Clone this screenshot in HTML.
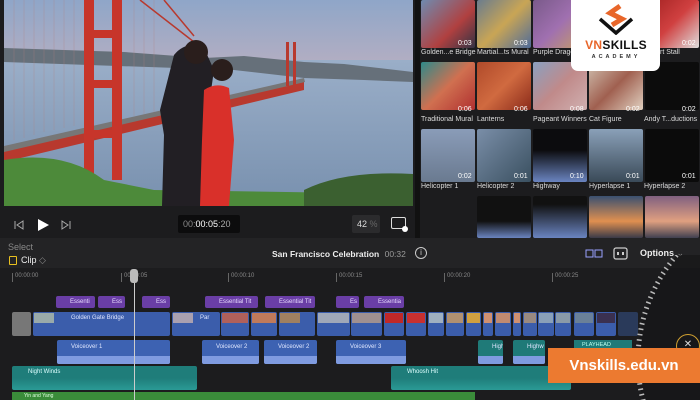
<!DOCTYPE html>
<html><head><meta charset="utf-8"><style>
*{margin:0;padding:0;box-sizing:border-box}
html,body{width:700px;height:400px;overflow:hidden}
body{background:#1c1c1e;font-family:"Liberation Sans",sans-serif;color:#ddd}
#w{position:relative;width:700px;height:400px;overflow:hidden}
.a{position:absolute}
.th{position:absolute;width:54px;height:48px;border-radius:2px}
.lb{position:absolute;font-size:7px;color:#ddd;white-space:nowrap}
.du{position:absolute;font-size:7px;color:#fff}
.t{position:absolute;top:296px;height:12px;background:#6a3ea6;border-radius:2px;font-size:6px;color:#e8dcff;padding:3px 0 0 14px;overflow:hidden;white-space:nowrap}
.c{position:absolute;top:312px;height:24px;background:#3b5dab;border-radius:2px;overflow:hidden}
.c i{position:absolute;left:1px;top:1px;right:1px;height:10px;display:block}
.v{position:absolute;top:340px;height:24px;background:#3d62b2;border-radius:2px;font-size:6px;color:#dfe6ff;padding:4px 0 0 14px;overflow:hidden;white-space:nowrap}
.v:after{content:"";position:absolute;left:0;right:0;bottom:0;height:8px;background:#7f9be0}
.ru{position:absolute;top:273px;font-size:6px;color:#888;border-left:1px solid #666;padding-left:2px;height:9px}
</style></head><body><div id="w">
<svg class="a" style="left:4px;top:0" width="409" height="206" viewBox="0 0 409 206">
<defs><linearGradient id="sk" x1="0" y1="0" x2="0" y2="1"><stop offset="0" stop-color="#8fa6c8"/><stop offset=".5" stop-color="#c9b3bf"/><stop offset="1" stop-color="#a9b6cc"/></linearGradient>
<linearGradient id="wa" x1="0" y1="0" x2="0" y2="1"><stop offset="0" stop-color="#9aaec8"/><stop offset="1" stop-color="#7890ae"/></linearGradient></defs>
<rect width="409" height="206" fill="url(#sk)"/>
<rect y="60" width="409" height="146" fill="url(#wa)"/>
<path d="M0 48 L120 52 L200 58 L240 56 L300 62 L340 64 L409 72 L409 82 L360 80 L300 78 L230 70 L0 62Z" fill="#66707a"/>
<path d="M0 150 L300 80 L300 90 L0 162Z" fill="#b8392e"/>
<path d="M0 146 L300 78 L301 82 L0 152Z" fill="#777"/>
<path d="M10 0 V140 M20 0 V138 M30 0 V135 M40 0 V132 M50 0 V130 M60 0 V128 M70 0 V126 M130 0 V116 M140 0 V114 M150 0 V112" stroke="#b08080" stroke-width=".5" opacity=".6"/>
<rect x="80" y="0" width="10" height="180" fill="#c7352a"/><rect x="108" y="0" width="10" height="180" fill="#c7352a"/>
<rect x="88" y="30" width="22" height="8" fill="#c7352a"/><rect x="88" y="80" width="22" height="8" fill="#c7352a"/><rect x="88" y="130" width="22" height="8" fill="#c7352a"/>
<rect x="282" y="42" width="3" height="44" fill="#b8392e"/><rect x="289" y="42" width="3" height="44" fill="#b8392e"/>
<path d="M136 0 L190 42" stroke="#b8392e" stroke-width="1.5"/><path d="M160 0 L190 36" stroke="#b8392e" stroke-width="1.5"/>
<path d="M0 160 Q60 150 100 180 L150 190 L409 194 L409 206 L0 206Z" fill="#4d8a3a"/>
<path d="M300 190 Q340 170 409 174 L409 206 L300 206Z" fill="#3b6030"/>
<path d="M170 55 Q182 40 200 48 L210 70 L200 140 L200 206 L158 206 L160 135 L156 110Z" fill="#221f24"/>
<circle cx="192" cy="52" r="12" fill="#2a1e1c"/>
<path d="M200 90 Q212 82 225 88 L230 140 L225 206 L196 206 L198 140Z" fill="#d9302a"/>
<circle cx="218" cy="70" r="11" fill="#2a1e1c"/>
</svg>
<div class="a" style="left:0;top:206px;width:415px;height:32px;background:#1c1c1e"></div>
<svg class="a" style="left:12px;top:218px" width="70" height="14"><path d="M3 3v8M11 3L5 7l6 4z" stroke="#aaa" fill="none" stroke-width="1"/><path d="M26 1l11 6-11 6z" fill="#fff"/><path d="M50 3l6 4-6 4zM58 3v8" stroke="#aaa" fill="none" stroke-width="1"/></svg>
<div class="a" style="left:178px;top:215px;width:62px;height:18px;background:#0c0c0d;border-radius:2px;font-size:9px;color:#fff;padding:4px 0 0 5px"><span style="color:#888">00:</span>00:05<span style="color:#aaa">:20</span></div>
<div class="a" style="left:352px;top:215px;width:28px;height:18px;background:#2b2b2d;border-radius:2px;font-size:9px;color:#ddd;padding:4px 0 0 5px">42 <span style="color:#666">%</span></div>
<div class="a" style="left:391px;top:217px;width:15px;height:12px;border:1.5px solid #ddd;border-radius:2px"></div><div class="a" style="left:402px;top:226px;width:6px;height:6px;border-radius:3px;background:#fff"></div>
<div class="a" style="left:415px;top:0;width:5px;height:238px;background:#111"></div>
<div class="th" style="left:421px;top:0;background:linear-gradient(135deg,#6f8bb0,#b04040 60%,#334)"></div>
<div class="th" style="left:477px;top:0;background:linear-gradient(135deg,#6a7c8e,#c9a555,#4f6b9a)"></div>
<div class="th" style="left:533px;top:0;background:linear-gradient(135deg,#7a5a8a,#a070b0,#c8a060)"></div>
<div class="th" style="left:645px;top:0;background:linear-gradient(135deg,#a02020,#d04040,#ddd)"></div>
<div class="lb" style="left:421px;top:49px">Golden...e Bridge</div><div class="lb" style="left:477px;top:49px">Martial...ts Mural</div><div class="lb" style="left:533px;top:49px">Purple Drago</div><div class="lb" style="left:660px;top:49px">rt Stall</div>
<div class="th" style="left:421px;top:62px;background:linear-gradient(135deg,#2e8a8a,#d07050,#b03030)"></div>
<div class="th" style="left:477px;top:62px;background:linear-gradient(135deg,#b04a2a,#d06a40,#8a2a1a)"></div>
<div class="th" style="left:533px;top:62px;background:linear-gradient(135deg,#8aa0c0,#c08a8a,#d0b0b0)"></div>
<div class="th" style="left:589px;top:62px;background:linear-gradient(135deg,#d0c0b0,#a06050,#e0d0c0)"></div>
<div class="th" style="left:645px;top:62px;background:#0c0c0c"></div>
<div class="lb" style="left:421px;top:116px">Traditional Mural</div><div class="lb" style="left:477px;top:116px">Lanterns</div><div class="lb" style="left:533px;top:116px">Pageant Winners</div><div class="lb" style="left:589px;top:116px">Cat Figure</div><div class="lb" style="left:644px;top:116px">Andy T...ductions</div>
<div class="th" style="left:421px;top:129px;height:53px;background:linear-gradient(#8a9cb8,#6a7a90)"></div>
<div class="th" style="left:477px;top:129px;height:53px;background:linear-gradient(135deg,#7a8ea8,#3a5060)"></div>
<div class="th" style="left:533px;top:129px;height:53px;background:linear-gradient(#0c0c0e 40%,#6a84c0)"></div>
<div class="th" style="left:589px;top:129px;height:53px;background:linear-gradient(#8aa0b8,#3a4a58)"></div>
<div class="th" style="left:645px;top:129px;height:53px;background:#0b0b0b"></div>
<div class="lb" style="left:421px;top:183px">Helicopter 1</div><div class="lb" style="left:477px;top:183px">Helicopter 2</div><div class="lb" style="left:533px;top:183px">Highway</div><div class="lb" style="left:589px;top:183px">Hyperlapse 1</div><div class="lb" style="left:644px;top:183px">Hyperlapse 2</div>
<div class="th" style="left:477px;top:196px;height:42px;background:linear-gradient(#111 60%,#6a84c0)"></div>
<div class="th" style="left:533px;top:196px;height:42px;background:linear-gradient(#111 20%,#6a84c0)"></div>
<div class="th" style="left:589px;top:196px;height:42px;background:linear-gradient(#3a5070,#e09050 60%,#3a3a48)"></div>
<div class="th" style="left:645px;top:196px;height:42px;background:linear-gradient(#806080,#e0a080 60%,#404050)"></div>
<div class="du" style="left:458px;top:40px">0:03</div><div class="du" style="left:514px;top:40px">0:03</div><div class="du" style="left:682px;top:40px">0:02</div>
<div class="du" style="left:458px;top:106px">0:06</div><div class="du" style="left:514px;top:106px">0:06</div><div class="du" style="left:570px;top:106px">0:08</div><div class="du" style="left:626px;top:106px">0:02</div><div class="du" style="left:682px;top:106px">0:02</div>
<div class="du" style="left:458px;top:173px">0:02</div><div class="du" style="left:514px;top:173px">0:01</div><div class="du" style="left:570px;top:173px">0:10</div><div class="du" style="left:626px;top:173px">0:01</div><div class="du" style="left:682px;top:173px">0:01</div>
<div class="a" style="left:571px;top:0;width:89px;height:71px;background:#fff;border-radius:0 0 7px 7px"></div>
<svg class="a" style="left:596px;top:3px" width="40" height="32"><path d="M24 3 L14 10 L26 16 L16 22" stroke="#e8662a" stroke-width="5" fill="none"/><path d="M4 16 L20 30 L36 16" stroke="#111" stroke-width="3.5" fill="none"/></svg>
<div class="a" style="left:574px;top:38px;width:84px;text-align:center;font-size:12px;font-weight:bold;color:#111;letter-spacing:.3px"><span style="color:#e8662a">VN</span>SKILLS</div>
<div class="a" style="left:574px;top:54px;width:84px;text-align:center;font-size:5.5px;font-weight:bold;color:#333;letter-spacing:3px">ACADEMY</div>
<div class="a" style="left:0;top:238px;width:700px;height:30px;background:#232325"></div>
<div class="a" style="left:8px;top:242px;font-size:9px;color:#888">Select</div>
<div class="a" style="left:9px;top:256px;width:8px;height:9px;border:1.5px solid #e8c020;border-radius:1px"></div>
<div class="a" style="left:21px;top:255px;font-size:9px;color:#eee">Clip <span style="color:#888">◇</span></div>
<div class="a" style="left:272px;top:249px;font-size:8.5px;font-weight:bold;color:#eee;white-space:nowrap">San Francisco Celebration <span style="font-weight:normal;color:#999;margin-left:3px">00:32</span></div>
<div class="a" style="left:415px;top:247px;width:12px;height:12px;border:1px solid #ccc;border-radius:6px;font-size:8px;text-align:center;line-height:10px;color:#ccc">i</div>
<svg class="a" style="left:585px;top:246px" width="50" height="16"><rect x="1" y="4" width="7" height="7" stroke="#99a0ff" fill="none"/><rect x="10" y="4" width="7" height="7" stroke="#99a0ff" fill="none"/><rect x="29" y="2" width="13" height="11" rx="2" stroke="#ccc" fill="none" stroke-width="1.3"/><rect x="32" y="6" width="2" height="3" fill="#ccc"/><rect x="37" y="6" width="2" height="3" fill="#ccc"/></svg>
<div class="a" style="left:640px;top:248px;font-size:9px;font-weight:bold;color:#eee">Options <span style="color:#888;font-weight:normal">⌄</span></div>
<div class="ru" style="left:12px">00:00:00</div><div class="ru" style="left:121px">00:00:05</div><div class="ru" style="left:228px">00:00:10</div><div class="ru" style="left:336px">00:00:15</div><div class="ru" style="left:444px">00:00:20</div><div class="ru" style="left:552px">00:00:25</div>
<div class="t" style="left:56px;width:39px">Essenti</div><div class="t" style="left:98px;width:27px">Ess</div><div class="t" style="left:142px;width:28px">Ess</div><div class="t" style="left:205px;width:53px">Essential Tit</div><div class="t" style="left:265px;width:50px">Essential Tit</div><div class="t" style="left:336px;width:23px">Es</div><div class="t" style="left:364px;width:40px">Essentia</div>
<div class="c" style="left:12px;width:19px;background:#777"></div>
<div class="c" style="left:33px;width:137px"><i style="width:20px;background:#9aa"></i><span style="position:absolute;left:38px;top:3px;font-size:6px;color:#dfe6ff">Golden Gate Bridge</span></div>
<div class="c" style="left:172px;width:48px"><i style="width:20px;background:#a9a0b0"></i><span style="position:absolute;left:28px;top:3px;font-size:6px;color:#dfe6ff">Par</span></div>
<div class="c" style="left:221px;width:28px"><i style="background:#b0605a"></i></div>
<div class="c" style="left:251px;width:26px"><i style="background:#c07a5a"></i></div>
<div class="c" style="left:279px;width:36px"><i style="width:20px;background:#a08060"></i></div>
<div class="c" style="left:317px;width:33px"><i style="background:#a0a8b8"></i></div>
<div class="c" style="left:351px;width:31px"><i style="background:#a09090"></i></div>
<div class="c" style="left:384px;width:20px"><i style="background:#c02828"></i></div>
<div class="c" style="left:406px;width:20px"><i style="background:#c83030"></i></div>
<div class="c" style="left:428px;width:16px"><i style="background:#a0b0c0"></i></div>
<div class="c" style="left:446px;width:18px"><i style="background:#b09070"></i></div>
<div class="c" style="left:466px;width:15px"><i style="background:#d0a040"></i></div>
<div class="c" style="left:483px;width:10px"><i style="background:#d09070"></i></div>
<div class="c" style="left:495px;width:16px"><i style="background:#c08a70"></i></div>
<div class="c" style="left:513px;width:8px"><i style="background:#d09070"></i></div>
<div class="c" style="left:523px;width:14px"><i style="background:#9a8a80"></i></div>
<div class="c" style="left:538px;width:16px"><i style="background:#8aa0b8"></i></div>
<div class="c" style="left:555px;width:16px"><i style="background:#8a9aa8"></i></div>
<div class="c" style="left:574px;width:20px"><i style="background:#6a8098"></i></div>
<div class="c" style="left:596px;width:20px"><i style="background:#3a3050"></i></div>
<div class="c" style="left:618px;width:20px;background:#2a3a5a"></div>
<div class="v" style="left:57px;width:113px">Voiceover 1</div><div class="v" style="left:202px;width:57px">Voiceover 2</div><div class="v" style="left:264px;width:53px">Voiceover 2</div><div class="v" style="left:336px;width:70px">Voiceover 3</div>
<div class="v" style="left:478px;width:25px;background:#1f7a78">High</div><div class="v" style="left:513px;width:32px;background:#1f7a78">Highw</div>
<div class="a" style="left:574px;top:340px;width:58px;height:10px;background:#1f7a78;font-size:5.5px;color:#bfe;padding:2px 0 0 8px">PLAYHEAD</div>
<div class="a" style="left:12px;top:366px;width:185px;height:24px;background:linear-gradient(#1f7d7a 50%,#2a9a95);border-radius:2px;font-size:6px;color:#dff;padding:3px 0 0 16px">Night Winds</div>
<div class="a" style="left:391px;top:366px;width:180px;height:24px;background:linear-gradient(#1f7d7a 50%,#2a9a95);border-radius:2px;font-size:6px;color:#dff;padding:3px 0 0 16px">Whoosh Hit</div>
<div class="a" style="left:12px;top:392px;width:463px;height:8px;background:#3a8c3a;font-size:5px;color:#dfd;padding:1px 0 0 12px">Yin and Yang</div>
<div class="a" style="left:134px;top:270px;width:1px;height:130px;background:#ccc"></div>
<div class="a" style="left:130px;top:269px;width:8px;height:14px;background:#bbb;border-radius:3px"></div>
<svg class="a" style="left:630px;top:255px" width="70" height="145"><circle cx="170" cy="105" r="162" fill="rgba(20,20,22,.6)" stroke="#bbb" stroke-width="5" stroke-dasharray="1.5 4"/></svg>
<div class="a" style="left:676px;top:334px;width:24px;height:24px;border-radius:12px;border:1.5px solid #d0a030;color:#ddd;font-size:10px;text-align:center;line-height:20px">✕</div>
<div class="a" style="left:548px;top:348px;width:152px;height:35px;background:#ec7a30;color:#fff;font-size:15px;font-weight:bold;text-align:center;line-height:35px">Vnskills.edu.vn</div>
</div></body></html>
